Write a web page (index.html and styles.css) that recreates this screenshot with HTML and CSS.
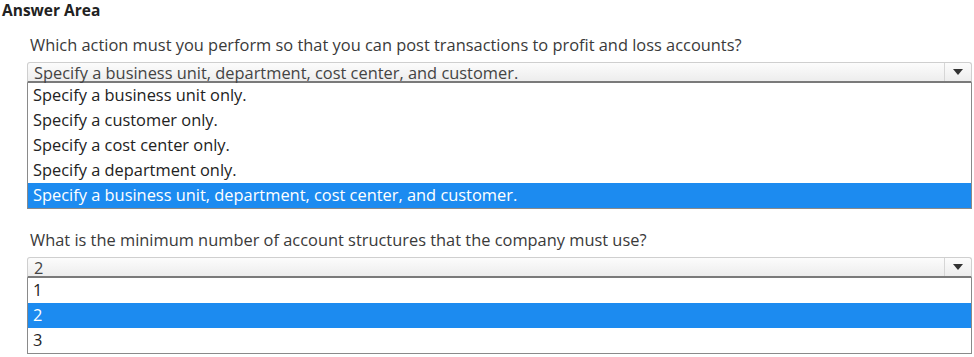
FILE: index.html
```html
<!DOCTYPE html>
<html lang="en">
<head>
  <meta charset="UTF-8" />
  <title>Answer Area</title>
  <link rel="stylesheet" href="styles.css">
</head>
<body>
  <h1 class="title">Answer Area</h1>

  <div class="question">
    <p class="prompt">Which action must you perform so that you can post transactions to profit and loss accounts?</p>
    <div class="select">
      <span class="value">Specify a business unit, department, cost center, and customer.</span>
      <span class="arrow"><svg width="10" height="6" viewBox="0 0 10 6"><path d="M0 0H10L5 6Z" fill="#333"/></svg></span>
    </div>
    <ul class="options">
      <li>Specify a business unit only.</li>
      <li>Specify a customer only.</li>
      <li>Specify a cost center only.</li>
      <li>Specify a department only.</li>
      <li class="selected">Specify a business unit, department, cost center, and customer.</li>
    </ul>
  </div>

  <div class="question">
    <p class="prompt">What is the minimum number of account structures that the company must use?</p>
    <div class="select">
      <span class="value">2</span>
      <span class="arrow"><svg width="10" height="6" viewBox="0 0 10 6"><path d="M0 0H10L5 6Z" fill="#333"/></svg></span>
    </div>
    <ul class="options">
      <li>1</li>
      <li class="selected">2</li>
      <li>3</li>
    </ul>
  </div>
</body>
</html>
```

FILE: styles.css
```css
* {
  margin: 0;
  padding: 0;
  box-sizing: border-box;
}

body {
  background: #fff;
  color: #333;
  font-family: 'Open Sans', sans-serif;
  font-size: 16.4px;
  padding: 0 2px;
}

.title {
  font-size: 15.5px;
  font-weight: 700;
  color: #222;
  line-height: 20px;
  margin-bottom: 14px;
}

.question {
  margin-left: 25px;
  margin-bottom: 20px;
}

.prompt {
  line-height: 22px;
  padding-left: 3px;
  margin-bottom: 6px;
  color: #3a3a3a;
}

.select {
  display: flex;
  height: 21px;
  border: 1px solid #cfcfcf;
  border-bottom: 2px solid #7a7a7a;
  border-radius: 3px 3px 0 0;
  background: linear-gradient(#fcfcfc, #ededed);
}

.select .value {
  flex: 1;
  line-height: 19px;
  padding-left: 6px;
  color: #444;
  white-space: nowrap;
}

.select .arrow {
  width: 27px;
  border-left: 1px solid #d6d6d6;
  display: flex;
  align-items: center;
  justify-content: center;
}

.options {
  list-style: none;
  border: 1px solid #8a8a8a;
  border-top: none;
}

.options li {
  height: 25px;
  line-height: 24px;
  padding-left: 5px;
  color: #222;
}

.options li.selected {
  background: #1c8bf0;
  color: #fff;
}
```
